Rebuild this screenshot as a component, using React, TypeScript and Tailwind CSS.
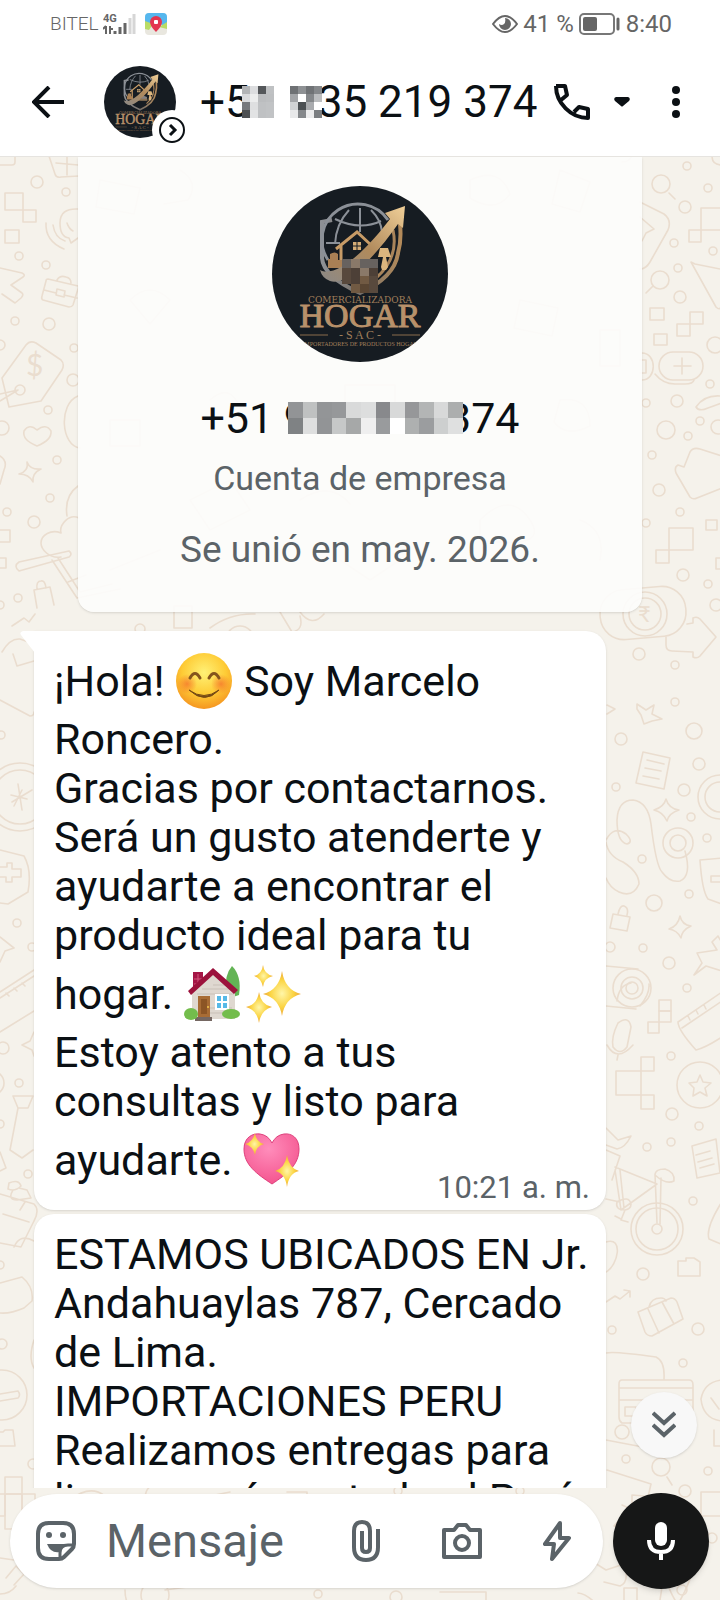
import type { ReactNode } from "react";

const dots: number[][] = [
  [37, 182, 6], [66, 192, 4], [19, 256, 4], [46, 265, 4], [15, 321, 4], [49, 324, 6], [74, 348, 4], [73, 380, 6],
  [20, 390, 5], [48, 410, 4], [57, 460, 4], [50, 498, 4], [34, 522, 6], [7, 512, 4], [18, 598, 4], [0, 345, 5],
  [2, 428, 7], [0, 605, 4], [1, 735, 4], [17, 923, 4], [32, 947, 4], [3, 1048, 6], [19, 1083, 4], [0, 1124, 4],
  [28, 1174, 4], [0, 1265, 4], [2, 1344, 5], [33, 1464, 5], [687, 166, 4], [661, 184, 9], [708, 188, 4],
  [685, 207, 6], [674, 243, 4], [713, 251, 4], [678, 268, 4], [660, 280, 9], [680, 297, 6], [715, 345, 8],
  [710, 384, 4], [646, 403, 4], [677, 401, 6], [666, 430, 9], [700, 421, 4], [688, 436, 4], [718, 427, 7],
  [652, 455, 4], [659, 490, 6], [680, 512, 4], [646, 523, 4], [683, 575, 6], [708, 584, 4], [716, 605, 6],
  [639, 654, 6], [675, 665, 4], [675, 702, 4], [621, 739, 6], [616, 787, 4], [694, 731, 8], [699, 764, 6],
  [684, 790, 6], [691, 817, 4], [707, 838, 4], [642, 859, 4], [689, 894, 4], [654, 903, 8], [610, 947, 5],
  [643, 948, 4], [669, 963, 6], [687, 988, 4], [671, 1056, 4], [672, 1114, 6], [699, 1126, 4], [647, 1147, 4],
  [671, 1142, 4], [693, 1201, 4], [643, 1274, 6], [612, 1330, 4], [698, 1329, 6], [683, 1363, 4],
  [626, 1459, 4], [708, 1471, 4], [685, 1491, 6], [661, 1467, 9], [622, 1432, 7], [398, 1491, 4], [520, 1491, 4],
  [712, 1538, 5], [682, 1590, 5], [318, 1594, 4], [396, 1597, 6], [140, 629, 5], [240, 640, 14], [155, 1595, 14],
];

const boxes: number[][] = [
  [5, 193, 18, 17], [23, 210, 13, 12], [5, 230, 14, 13], [-4, 530, 14, 12], [-4, 558, 10, 10], [701, 208, 26, 22],
  [689, 230, 12, 12], [650, 308, 14, 12], [690, 312, 13, 12], [677, 324, 13, 12], [654, 334, 13, 11],
  [669, 528, 24, 22], [656, 550, 13, 13], [706, 520, 11, 10], [716, 558, 12, 11], [659, 1000, 12, 11],
  [659, 1011, 12, 11], [648, 1022, 11, 11], [616, 1071, 25, 24], [641, 1057, 13, 14], [641, 1095, 13, 14],
  [5, 1477, 17, 17], [5, 1494, 17, 35], [-10, 1494, 15, 22], [22, 1494, 13, 22], [701, 1492, 26, 24],
  [624, 1588, 13, 20], [174, 606, 18, 22],
];

const doodles = [
  "M0 165h12q3 0 3-3v-8M49 156l6 18q1 4 6 3l18-1M56 163l22 2M67 156v19",
  "M78 209q-18-1-18 14 0 14 9 15l2 5 7-5M46 223q-1 18 18 26M53 225q2 13 12 16M67 223q2 6 6 8",
  "M0 268l22 5q4 2 1 4l-12 8 11 8q2 2-1 5l-6 5-13-9",
  "M48 279l30 7q1 1 0 3l-5 16q-1 2-4 2l-26-7q-2-1-1-4l4-15q0-2 2-2zM57 280q3-5 9-3 5 1 5 6M44 290l12 3m8 2l13 3M57 289l8 2-1 6-8-2z",
  "M2 378l24-33q4-5 10-2l25 17q4 4 1 10l-21 31-32 6-7-29M0 401l18-11M0 394l18-4",
  "M37 446q-15-6-13-15 5-8 13-1 9-7 14 1 1 9-14 15z",
  "M27 462q3 8 14 7-9 4-8 13-4-8-14-8 10-3 8-12z",
  "M78 396c-20 8-17 50 2 52M78 486q-14 10-11 30",
  "M0 456q8 5 4 14l-4 14M61 557c-12 2-20-8-20-14 0-8 10-14 20-10-2-8 8-20 18-15",
  "M19 562l50-11q4 3 0 6l-50 14q-6-5 0-9zM52 560l25 38 43-9M58 558l22 34 32-8M68 582l18-7",
  "M34 590l16-3 4 18M34 590l3 18M37 589q-1-8 4-8 4-1 5 7M12 626l12-8 5 4 6-8",
  "M2 652q8-14 18-13l14 5M13 654l4 12 17-5M0 700l30 16q4 0 4-4",
  "M622 162q8 0 10-7M712 156q0 9 10 9M669 193l6 6M653 286l-7 7",
  "M640 202l24 12q8 6 4 16l-18 32q-4 7-10 7M640 217l14 12-8 4-4 8",
  "M691 262l25 45q4 4 5-1l4-36-30-6q-4-2-4-2z",
  "M642 353c15 0 15 27 0 27M655 374q8 10 20 10h10q8 0 9-4M682 358v16M674 366h17M640 360h6v13h-6",
  "M720 396q-16-1-24 11 3 5 12 1l14-5M722 456l-22-7q-7-2-10 3l-6 15-6-2q-4 2-2 8l14 24q3 3 7 1l25-10",
  "M666 637v8q0 6 6 6l21 1v5q4 2 7-1l16-19-16-18q-3-3-7-1v5l-6 1",
  "M607 705l8 4-8 5M637 704l9 6 8-5-2 9 10 5-10 2-8 3-3-9-4-6z",
  "M643 752l27 6-6 31-28-6zM647 760l17 4M645 768l16 3M643 776l16 3",
  "M606 840q8-15 20-6 8 8 1 10-10-2-10-24 1-20 16-20 15 2 18 24 5 42 11 48 8 11 18 9 12-5 5-30M606 842q2 14 17 20 16 10 16 22-6 14-20 8-9-4-13-14",
  "M666 799q3 10 13 11-10 3-12 11-4-9-13-11 10-3 12-11zM680 916q2 9 11 10-9 4-10 12-4-8-12-9 9-3 11-13z",
  "M613 914l17 3-3 14-17-3zM618 914q2-9 6-8 5 2 3 9M722 858l-22 2q2 31 8 39l14 5M711 876h11v6h-11z",
  "M722 943l-4-7-6 6 5 8-20 3 5 10-8 12 12-9 16 5M606 966l32 3M606 1006l30 3M617 1001q2-16 14-18M640 1006q10-12 9-22",
  "M618 1023q11-8 13 4l-4 20q-7 9-14 0-2-10 5-24zM607 1045q10 18 26 0M618 1055l-1 5",
  "M678 1022l44-30M678 1022q0 8 18 28 9-2 26-13M682 1028l40-27M688 1016l2 4m6-10l2 4m6-9l2 4",
  "M700 1075l3 7 8 1-6 5 2 8-7-4-7 4 1-8-5-5 8-1z",
  "M606 1128l12 12 13-4q-6 12-14 13l-11-4M606 1150l14 6-8 24M615 1167l42 17-36 26-6-40M620 1170l4 38M655 1174l2 49m4-45l-1 46M655 1175q0-6 10-6 10 3 9 12-8 4-19-6M606 1199l14 3M625 1210q-10 0-8-8 12-7 14 2 0 5-6 6l-4 10 7 2m-13-6l6 3",
  "M692 1146l24-7 4 34-23 5zM696 1155l14-4M698 1162l14-4M700 1168l14-4",
  "M678 1261h8v-3h8l6 4v14h-22zM606 1302l9-6 5 3 10-8m-6-1l6 1v6",
  "M638 1312l33-14q4 0 6 4l6 17-31 17q-5 0-7-4zM649 1307q2-9 12-9 4 0 5 3M648 1309l11 24M662 1302l12 22M725 1197q-20 30-16 42l14 6M606 1242c18-6 12 24 0 30",
  "M606 1353q8-2 50 4q9 4 8 22M622 1380h67q4 0 4 5v38h-71q-3-2-3-6v-33q0-4 3-4zM619 1388h74M619 1400h74M625 1407h11v9h-11zM722 1380q-18 2-21 19 2 20 21 22M711 1398l8 11",
  "M606 1440l42 8M607 1470l44 14-14 60M632 1495l24 2-6 10-18-3zM622 1505l18 8-10 20-16-7 12-14M714 1430v16h12M667 1477l5 8",
  "M0 850l24 6q8 14 4 36l-20 12-8-1M-2 867h9v-4h5v6h9v8h-9v5h-6v-5h-6M0 937l14 11-9 3-5 11",
  "M0 992l34-22M0 998l34-22M6 993l3 3m5-8l3 3m5-8l3 3M0 1032l34-21M34 1032l-4 9-8 4 10 5 2 6",
  "M13 1096h20l-5 12h-10zM18 1108l-8 42 12 8 11-8M13 1096l5 12M0 1152l6 16-6 3",
  "M9 1183q10-4 12 3-6 6-13 3zM13 1190q-6 10 4 10l14-2-4-8-8-2M25 1202l-5 8M0 1194l34 10q6 6 0 17l-13 26-21-4M3 1214l26 8M14 1247q6-14 20-6",
  "M0 1283l22-6q12 10 10 24l-8 7q-14 6-24 5M34 1340q-6 18 0 28M0 1394l18-3q3 4 0 7l-18 3M0 1432h3l2-2h8l2 16h-15",
  "M0 1558l14 2M6 1578l10-12 8 8-10 11M0 1594q10 0 16-8M125 1590q0 18 12 18M165 1590l60-8",
  "M70 1500q20-16 35-4M145 1500q0-14 10-15M190 1500l40-8M287 1492h20v8M210 628q20-15 45-14M280 612l12 20q12-2 8-16M300 612q12 16 24 2",
  "M590 1560l16 10 18-6q6 18-4 22l-16-4M600 1608q-12-14-22-15M440 1592h46v14M660 1600l4-26q8 24 14 30 12-20 18-44",
];

// doodles that show faintly through the business card
const cardDoodles = [
  "M100 180l40 8-6 26-38-7zM180 170q20 12 8 30l-24 4M560 170l30 12-10 30-28-8zM470 180q30-14 40 14-14 20-40 4z",
  "M130 300q20-20 40 0l-20 24zM520 300l38 8-6 28-38-8zM110 420h30v26h-30zM560 400q30-4 30 26-24 12-36-4z",
  "M190 500l40-20 20 30-40 20zM480 520q30-30 50 0t-50 20zM110 570l50-20M340 560l30 20 30-20M300 500q30-20 50 4",
  "M345 385h50v18q-25 10-50 0zM600 330h20v36h-20zM210 400q20-18 30 8M580 520q26 10 20 40",
];

function Wallpaper() {
  return (
    <svg
      className="absolute inset-0 h-full w-full"
      viewBox="0 157 720 1443"
      preserveAspectRatio="xMidYMin slice"
      fill="none"
      stroke="#eaddcf"
      strokeWidth="1.6"
      strokeLinecap="round"
      strokeLinejoin="round"
      aria-hidden="true"
    >
      {dots.map(([cx, cy, r], i) => (
        <circle key={i} cx={cx} cy={cy} r={r} />
      ))}
      {boxes.map(([x, y, w, h], i) => (
        <rect key={i} x={x} y={y} width={w} height={h} />
      ))}
      {doodles.concat(cardDoodles).map((d, i) => (
        <path key={i} d={d} />
      ))}
      <rect x="659" y="352" width="44" height="28" rx="14" />
      <rect x="600" y="588" width="86" height="50" rx="24" transform="rotate(-5 643 613)" />
      <circle cx="645" cy="614" r="22" />
      <circle cx="645" cy="614" r="16" />
      <circle cx="678" cy="843" r="15" />
      <circle cx="678" cy="843" r="8" />
      <circle cx="720" cy="797" r="22" />
      <circle cx="720" cy="797" r="15" />
      <circle cx="632" cy="988" r="19" />
      <circle cx="632" cy="988" r="11" />
      <circle cx="632" cy="988" r="6" />
      <circle cx="700" cy="1085" r="23" />
      <circle cx="657" cy="1229" r="26" />
      <circle cx="657" cy="1229" r="21" />
      <circle cx="657" cy="1229" r="5" />
      <circle cx="20" cy="797" r="34" />
      <circle cx="20" cy="797" r="27" />
      <path d="M18 784l4 26M11 795l16 4M12 802l20-12M14 806l8-16" />
      <circle cx="2" cy="1395" r="25" />
      <circle cx="-8" cy="1083" r="12" />
      <g fill="#eaddcf" stroke="none" fontFamily="Lato, sans-serif">
        <text x="26" y="376" fontSize="30">$</text>
        <text x="638" y="622" fontSize="22">₹</text>
      </g>
    </svg>
  );
}

function Logo({ className, pixelated = false }: { className: string; pixelated?: boolean }) {
  return (
    <svg viewBox="0 0 176 176" className={className} role="img" aria-label="Comercializadora Hogar SAC">
      <defs>
        <linearGradient id="gold" x1="0" y1="1" x2="1" y2="0">
          <stop offset="0" stopColor="#8b8987" />
          <stop offset="0.5" stopColor="#b08a5c" />
          <stop offset="1" stopColor="#f0cf98" />
        </linearGradient>
        <linearGradient id="shield" x1="0" x2="1">
          <stop offset="0" stopColor="#8d9095" />
          <stop offset="0.5" stopColor="#777069" />
          <stop offset="1" stopColor="#b38a5a" />
        </linearGradient>
        <clipPath id="round">
          <circle cx="88" cy="88" r="88" />
        </clipPath>
      </defs>
      <g clipPath="url(#round)">
        <rect width="176" height="176" fill="#161c22" />
        <path d="M60 34l-10 2v36c1 14 18 26 38 35 22-10 36-24 38-40 3-10 3-19 2-29" fill="none" stroke="url(#shield)" strokeWidth="4" />
        <g fill="none" stroke="#8b9097" strokeWidth="2">
          <path d="M56 74a35 35 0 1 1 60-40" strokeWidth="3" />
          <path d="M88 22v24M77 24q-13 14-14 34M99 24q10 10 11 22M63 33q25 12 46 2M54 57h14" />
        </g>
        <path d="M121 44q6 28-17 48" fill="none" stroke="#a9845a" strokeWidth="3" />
        <path d="M64 63l21-17 14 13M69 60v22" fill="none" stroke="#c79b66" strokeWidth="3" />
        <path d="M81 56h8v8h-8z" fill="#d5ad76" />
        <path d="M85 56v8M81 60h8" stroke="#161c22" />
        <path d="M58 68q5-3 8 0v6h4v8H56v-9h2z" fill="#a98055" />
        <path d="M108 62h8l3 9h-13zM111 71h3l2 10-2 3h-4l-1-3z" fill="#dcb67e" />
        <path d="M92 72q7 0 13 4v8H90z" fill="#858181" />
        <path d="M72 80h34v5H72z" fill="#8b7355" />
        <path d="M48 84C62 92 90 70 118 33l-5-6 20-7-2 22-5-4C98 78 72 100 58 95q-8-3-10-11z" fill="url(#gold)" />
        {pixelated && (
          <g shapeRendering="crispEdges">
            <path d="M70 73h36v9H70z" fill="#67625f" />
            <path d="M70 82h9v16h-9zM97 90h9v17h-9z" fill="#58493d" />
            <path d="M79 73h9v9h-9zM88 82h9v8h-9z" fill="#8a7969" />
            <path d="M79 82h9v16h-9zM97 82h9v8h-9z" fill="#4d4037" />
            <path d="M88 90h9v8h-9zM79 98h9v9h-9z" fill="#715a43" />
            <path d="M88 98h9v9h-9z" fill="#5a4633" />
          </g>
        )}
        <g fontFamily="'Liberation Serif', serif" textAnchor="middle" fill="#a17f5b">
          <text x="88" y="117" fontSize="9" fontFamily="'DejaVu Serif', serif">COMERCIALIZADORA</text>
          <text x="88" y="141" fontSize="34" fill="#b8916a" stroke="#b8916a">HOGAR</text>
          <text x="88" y="153" fontSize="12">- S A C -</text>
          <text x="88" y="160" fontSize="6">IMPORTADORES DE PRODUCTOS HOGAR</text>
        </g>
        <path d="M28 149h28M120 149h28" stroke="#8a6c4c" />
      </g>
    </svg>
  );
}

function Mosaic({ cells, cols, cell, className }: { cells: string[]; cols: number; cell: number; className: string }) {
  const rows = cells.length / cols;
  return (
    <svg className={className} viewBox={`0 0 ${cols * cell} ${rows * cell}`} preserveAspectRatio="none" shapeRendering="crispEdges" aria-hidden="true">
      {cells.map((fill, i) => (
        <rect key={i} x={(i % cols) * cell} y={Math.floor(i / cols) * cell} width={cell} height={cell} fill={fill} />
      ))}
    </svg>
  );
}

const mosaicA = [
  "#b2b4b6", "#dcdddf", "#54575a", "#bfc1c3",
  "#d9dadc", "#eceded", "#bbbdbf", "#bdbfc1",
  "#77797c", "#dedfe0", "#bfc1c3", "#c1c3c5",
  "#4d5053", "#e2e3e4", "#bfc1c3", "#c1c3c5",
];
const mosaicB = [
  "#6e7174", "#8e9194", "#707376", "#85888b",
  "#a3a5a8", "#ffffff", "#85888b", "#bcbec0",
  "#d0d2d4", "#4c5053", "#a9abae", "#ffffff",
  "#e8e9ea", "#85888b", "#ececed", "#7b7e81",
];
const mosaicC = [
  "#929496", "#bfc1c1", "#939597", "#96989a", "#d9dada", "#dddede", "#88898c", "#d8d9d9", "#969799", "#b3b5b5", "#d8d9d9", "#acaeae",
  "#7f8284", "#dedfdf", "#929496", "#c6c8c8", "#a6a8a8", "#efefef", "#999b9d", "#ffffff", "#aeb0b0", "#9b9d9f", "#cdcfcf", "#dfe0e0",
];

function SmileEmoji() {
  return (
    <svg viewBox="0 0 58 58" className="size-[58px]" role="img" aria-label="😊">
      <defs>
        <radialGradient id="face" cx="0.5" cy="0.35" r="0.65">
          <stop offset="0" stopColor="#fff176" />
          <stop offset="0.6" stopColor="#fecb35" />
          <stop offset="1" stopColor="#f59520" />
        </radialGradient>
        <radialGradient id="cheek">
          <stop offset="0" stopColor="#f4702c" stopOpacity="0.75" />
          <stop offset="1" stopColor="#f4702c" stopOpacity="0" />
        </radialGradient>
      </defs>
      <circle cx="29" cy="29" r="28" fill="url(#face)" />
      <circle cx="12" cy="32" r="10" fill="url(#cheek)" />
      <circle cx="46" cy="32" r="10" fill="url(#cheek)" />
      <path d="M15 26q5-9 10 0M34 26q5-9 10 0" fill="none" stroke="#85551c" strokeWidth="3" strokeLinecap="round" />
      <path d="M14 38q15 11 30 0-14 15-30 0z" fill="#754a14" stroke="#754a14" strokeLinejoin="round" />
    </svg>
  );
}

function HouseEmoji() {
  return (
    <svg viewBox="0 0 58 58" className="size-[58px]" role="img" aria-label="🏡">
      <path d="M48 1q10 10 7 29l-6 2-7-4q-2-18 6-27z" fill="#63b455" />
      <path d="M48 28h2v25h-4z" fill="#7c5339" />
      <path d="M9 7h10v14L9 29z" fill="#a51646" />
      <path d="M10 14h8M10 19h6M14 9v9" stroke="#d4577d" />
      <path d="M8 28L29 9l22 19v26H8z" fill="#dfd8d0" />
      <path d="M29 20h12M18 24h30M13 29h37M26 43h22M26 48h22" stroke="#c9c0b7" />
      <path d="M29 3L4 26l3 4L29 10l21 19 4-4z" fill="#9c123c" />
      <path d="M14 31h12v21H14z" fill="#a86c35" />
      <path d="M17 34h6v15h-6z" fill="#8c5525" />
      <circle cx="24" cy="42" r="1" fill="#f1c44b" />
      <path d="M31 29h14v16H31z" fill="#fff" />
      <path d="M33 31h4v5h-4zM39 31h4v5h-4zM33 38h4v5h-4zM39 38h4v5h-4z" fill="#56b9e7" />
      <path d="M11 52h17v4H11z" fill="#756762" />
      <ellipse cx="7" cy="49" rx="7" ry="6" fill="#73bd4c" />
      <ellipse cx="47" cy="49" rx="9" ry="5" fill="#73bd4c" />
    </svg>
  );
}

function StarDefs() {
  return (
    <radialGradient id="star">
      <stop offset="0" stopColor="#fff6a8" />
      <stop offset="0.6" stopColor="#fbd443" />
      <stop offset="1" stopColor="#eda63a" />
    </radialGradient>
  );
}

function SparklesEmoji() {
  return (
    <svg viewBox="0 0 58 58" className="ml-[3px] size-[58px]" role="img" aria-label="✨">
      <defs><StarDefs /></defs>
      <g fill="url(#star)">
        <path d="M37 6q3 19 19 23-16 4-19 22-3-18-19-22 16-4 19-23z" />
        <path d="M14 27q2 13 13 15-11 3-13 16Q12 45 1 42q11-2 13-15z" />
        <path d="M18 0q1 9 10 11-9 2-10 11-2-9-9-11 8-2 9-11z" />
      </g>
    </svg>
  );
}

function HeartEmoji() {
  return (
    <svg viewBox="0 0 58 58" className="size-[58px]" role="img" aria-label="💖">
      <defs>
        <StarDefs />
        <radialGradient id="heart" cx="0.45" cy="0.3" r="0.7">
          <stop offset="0" stopColor="#ff8dbb" />
          <stop offset="1" stopColor="#f4558f" />
        </radialGradient>
      </defs>
      <path d="M29 53C14 43 1 34 1 18 1 6 10 2 17 3q8 1 12 9 4-8 12-9c8-1 15 4 15 15 0 16-12 25-27 35z" fill="url(#heart)" stroke="#de3f7b" />
      <g fill="url(#star)">
        <path d="M12 2q1 9 9 11-8 2-9 11-2-9-10-11 8-2 10-11z" />
        <path d="M44 24q2 13 12 16-10 2-12 16-2-14-12-16 10-3 12-16z" />
      </g>
    </svg>
  );
}

function Line({ children, tall = false }: { children: ReactNode; tall?: boolean }) {
  return (
    <span className={`flex items-center whitespace-pre ${tall ? "h-[68px]" : "h-[49px]"}`}>{children}</span>
  );
}

function StatusBar() {
  return (
    <div className="flex h-12 shrink-0 items-center justify-between pr-12 pl-[50px] text-[#666]">
      <div className="flex items-center gap-1">
        <span className="text-[19px] font-light">BITEL</span>
        <svg width="34" height="24" viewBox="0 0 34 24" aria-label="4G">
          <text x="0" y="10" fontSize="11" fontWeight="bold" fontFamily="Roboto, sans-serif" fill="#666">4G</text>
          <g stroke="#666" strokeWidth="2" fill="none">
            <path d="M3 14v8M0 17l3-3M7 14v8M7 17h3" />
            <path d="M12 19v3M17 15v7M22 11v11" strokeWidth="3" />
          </g>
          <path d="M27 6v16M31 2v20" stroke="#d6d6d6" strokeWidth="3" />
        </svg>
        <svg width="22" height="22" viewBox="0 0 22 22" className="ml-1" aria-label="Mapas">
          <rect width="22" height="22" rx="4" fill="#e9e7df" />
          <path d="M0 14V4q0-4 4-4h14q4 0 4 4v9q-12-4-22 1z" fill="#56b7ee" />
          <path d="M0 16V8l8 3-4 6zM14 14l8-5v7z" fill="#b9dc65" />
          <path d="M11 19Q5 13 5 9a6 6 0 0 1 12 0q0 4-6 10z" fill="#e33650" />
          <rect x="9" y="7" width="4" height="4" rx="1" fill="#fff" />
        </svg>
      </div>
      <div className="flex items-center gap-[5px] text-2xl">
        <svg width="26" height="18" viewBox="0 0 26 18" fill="none" stroke="#666" strokeWidth="2" aria-hidden="true">
          <path d="M1 9q12-16 24 0-12 16-24 0z" />
          <path d="M13 3a6 6 0 1 1-6 6q3 2 5 0t1-6z" fill="#666" stroke="none" />
        </svg>
        <span>41 %</span>
        <svg width="42" height="22" viewBox="0 0 42 22" aria-hidden="true">
          <rect x="1" y="1" width="34" height="20" rx="4" fill="none" stroke="#777" strokeWidth="2" />
          <rect x="4" y="4" width="14" height="14" rx="2" fill="#666" />
          <path d="M39 6v10" stroke="#666" strokeWidth="3" strokeLinecap="round" />
        </svg>
        <span>8:40</span>
      </div>
    </div>
  );
}

function Header() {
  return (
    <header className="flex h-[109px] shrink-0 items-center border-b border-[#e6e4e0] pr-10 pl-8">
      <button aria-label="Atrás" className="mr-10">
        <svg width="32" height="32" viewBox="0 0 32 32" fill="none" stroke="#0b1014" strokeWidth="4">
          <path d="M32 16H3M17 1L2 16l15 15" />
        </svg>
      </button>
      <div className="relative">
        <Logo className="size-[72px]" />
        <svg className="absolute -right-5 -bottom-4 size-12" viewBox="0 0 48 48" fill="none" stroke="#0b1014" strokeWidth="3" aria-hidden="true">
          <circle cx="24" cy="24" r="20" fill="#fff" stroke="none" />
          <circle cx="24" cy="24" r="12" strokeWidth="2" />
          <path d="M22 19l5 5-5 5" />
        </svg>
      </div>
      <h1 className="flex flex-1 items-center text-[44px] leading-[52px] whitespace-pre pl-6">
        +5
        <Mosaic cells={mosaicA} cols={4} cell={8} className="relative -ml-2 h-8 w-8" />
        <Mosaic cells={mosaicB} cols={4} cell={8} className="relative z-10 -mr-1 ml-4 h-8 w-8" />
        35 219 374
      </h1>
      <button aria-label="Llamar" className="flex items-center gap-6">
        <svg width="36" height="36" viewBox="0 0 36 36" fill="none" stroke="#0b1014" strokeWidth="4" strokeLinejoin="round">
          <path d="M2 2h9l2 9-6 5M2 2c0 17 15 32 32 32v-9l-9-2-5 5" />
        </svg>
        <svg width="16" height="10" viewBox="0 0 16 10" fill="#0b1014">
          <path d="M2 0h12q3 1 1 4L9 9q-1 1-2 0L1 4q-2-3 1-4z" />
        </svg>
      </button>
      <button aria-label="Más opciones" className="ml-[42px]">
        <svg width="8" height="32" viewBox="0 0 8 32" fill="#0b1014">
          <circle cx="4" cy="4" r="4" />
          <circle cx="4" cy="16" r="4" />
          <circle cx="4" cy="28" r="4" />
        </svg>
      </button>
    </header>
  );
}

function BusinessCard() {
  return (
    <section className="mx-[78px] flex flex-col items-center rounded-b-2xl bg-[#fdfdfc]/90 pt-[29px] pb-[38px] shadow-sm">
      <Logo className="size-[176px]" pixelated />
      <h2 className="mt-7 flex items-center text-[43px] leading-[56px] whitespace-pre text-[#0b1014]">
        +51 9
        <Mosaic cells={mosaicC} cols={12} cell={14} className="relative z-10 -mr-4 -ml-5 h-8 w-[175px]" />
        374
      </h2>
      <p className="mt-2 text-[34px] leading-12 text-[#5b6368]">Cuenta de empresa</p>
      <p className="mt-6 text-[37px] leading-12 text-[#5b6368]">Se unió en may. 2026.</p>
    </section>
  );
}

function Messages() {
  return (
    <div className="mt-[19px] mr-[114px] ml-[34px] flex flex-col gap-1 text-[43px] leading-[49px] text-[#0b1014]">
      <article className="relative rounded-[20px] rounded-tl-none bg-white px-5 py-4 shadow-sm">
        <svg className="absolute top-0 -left-[14px]" width="15" height="22" viewBox="0 0 15 22" fill="#fff" aria-hidden="true">
          <path d="M15 0H3Q-1 1 1 4l14 18z" />
        </svg>
        <p>
          <Line tall>¡Hola! <SmileEmoji /> Soy Marcelo</Line>
          <Line>Roncero.</Line>
          <Line>Gracias por contactarnos.</Line>
          <Line>Será un gusto atenderte y</Line>
          <Line>ayudarte a encontrar el</Line>
          <Line>producto ideal para tu</Line>
          <Line tall>hogar. <HouseEmoji /><SparklesEmoji /></Line>
          <Line>Estoy atento a tus</Line>
          <Line>consultas y listo para</Line>
          <Line tall>ayudarte. <HeartEmoji /></Line>
        </p>
        <time className="absolute right-4 bottom-1 text-[31px] leading-9 text-[#5b6368]">10:21 a. m.</time>
      </article>
      <article className="rounded-[20px] bg-white px-5 py-4 shadow-sm">
        <p>
          <Line>ESTAMOS UBICADOS EN Jr.</Line>
          <Line>Andahuaylas 787, Cercado</Line>
          <Line>de Lima.</Line>
          <Line>IMPORTACIONES PERU</Line>
          <Line>Realizamos entregas para</Line>
          <Line>lima y envíos a todo el Perú</Line>
        </p>
      </article>
    </div>
  );
}

function Composer() {
  return (
    <form className="relative flex shrink-0 items-center gap-[10px] pt-[5px] pr-[11px] pb-[11px] pl-[10px]">
      <div className="flex h-[94px] min-w-0 flex-1 items-center rounded-full bg-white pr-8 pl-[26px] text-[#5b6368] shadow">
        <button type="button" aria-label="Stickers">
          <svg width="40" height="40" viewBox="0 0 40 40" fill="none" stroke="currentColor" strokeWidth="4">
            <path d="M13 2h14q11 0 11 11v10q0 3-2 5l-8 8q-2 2-5 2H13Q2 38 2 27V13Q2 2 13 2z" />
            <path d="M24 37v-5q0-8 8-8h6" strokeWidth="3" />
            <circle cx="13" cy="14" r="3" fill="currentColor" stroke="none" />
            <circle cx="27" cy="14" r="3" fill="currentColor" stroke="none" />
            <path d="M11 23h18q-4 3-5 8-9 2-13-8z" fill="currentColor" stroke="none" />
          </svg>
        </button>
        <input
          aria-label="Mensaje"
          placeholder="Mensaje"
          className="ml-[30px] h-16 min-w-0 flex-1 bg-transparent text-[47px] placeholder:text-[#5b6368] focus:outline-none"
        />
        <button type="button" aria-label="Adjuntar">
          <svg width="28" height="42" viewBox="0 0 28 42" fill="none" stroke="currentColor" strokeWidth="4">
            <path d="M26 9v18q0 13-12 13T2 27V11q0-9 8-9t8 9v17q0 4-4 4t-4-4V11" />
          </svg>
        </button>
        <button type="button" aria-label="Cámara" className="ml-[62px]">
          <svg width="40" height="36" viewBox="0 0 40 36" fill="none" stroke="currentColor" strokeWidth="4" strokeLinejoin="round">
            <path d="M2 7h10l4-5h8l4 5h10v27H2z" />
            <circle cx="20" cy="20" r="7" />
          </svg>
        </button>
        <button type="button" aria-label="Respuestas rápidas" className="ml-[61px]">
          <svg width="28" height="40" viewBox="0 0 28 40" fill="none" stroke="currentColor" strokeWidth="4" strokeLinejoin="round">
            <path d="M17 2L2 23h9L9 38l17-21h-9z" />
          </svg>
        </button>
      </div>
      <button type="button" aria-label="Grabar audio" className="flex size-24 shrink-0 items-center justify-center rounded-full bg-[#161717] shadow-md">
        <svg width="28" height="38" viewBox="0 0 28 38" fill="none" stroke="#fff" strokeWidth="4">
          <rect x="8" y="0" width="12" height="24" rx="6" fill="#fff" stroke="none" />
          <path d="M2 18q0 12 12 12t12-12M14 30v8" />
        </svg>
      </button>
    </form>
  );
}

export default function App() {
  return (
    <div className="flex h-screen flex-col overflow-hidden bg-white font-['Roboto','Liberation_Sans',sans-serif] text-[#0b1014]">
      <StatusBar />
      <Header />
      <div className="relative flex min-h-0 flex-1 flex-col bg-[#f5f2eb]">
        <Wallpaper />
        <main className="relative min-h-0 flex-1 overflow-hidden">
          <BusinessCard />
          <Messages />
          <button aria-label="Ir al final" className="absolute right-[23px] bottom-[30px] flex size-[66px] items-center justify-center rounded-full bg-[#f8f8f8] shadow">
            <svg width="24" height="28" viewBox="0 0 24 28" fill="none" stroke="#5b6368" strokeWidth="4">
              <path d="M1 2l11 10L23 2M1 14l11 10 11-10" />
            </svg>
          </button>
        </main>
        <Composer />
      </div>
    </div>
  );
}
